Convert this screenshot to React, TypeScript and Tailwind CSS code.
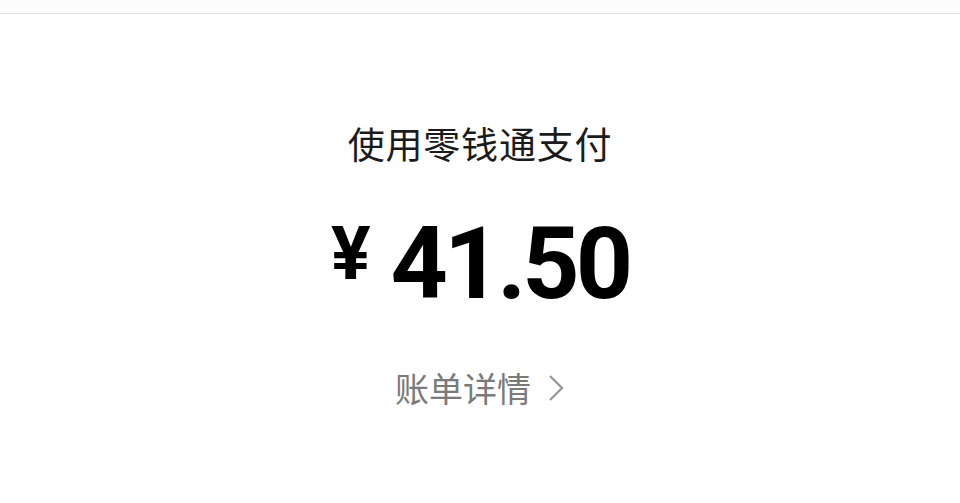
export default function App() {
  return (
    <div className="h-[503px] w-[960px] overflow-hidden bg-white font-['Noto_Sans_CJK_SC',sans-serif]">
      <div className="h-[14px] border-b border-[#e2e2e2] bg-[#fcfcfc]" />
      <div className="flex flex-col items-center">
        <h1 className="mt-[104px] text-[37px] leading-[50px] tracking-[0.8px] text-[#1b1b1b]">
          使用零钱通支付
        </h1>
        <div className="mt-[46px] flex items-center font-['Roboto',sans-serif] font-bold text-black">
          <span className="mr-[20px] mt-[-20px] text-[74px] leading-none">¥</span>
          <span className="text-[100px] leading-[100px] tracking-[-4px]">41.50</span>
        </div>
        <button className="mt-[52px] flex items-center gap-[16px] text-[34px] leading-[44px] text-[#7a7a7a]">
          账单详情
          <svg width="18" height="28" viewBox="0 0 18 28" fill="none">
            <path d="M3 2 L15 14 L3 26" stroke="#9a9a9a" strokeWidth="2.4" />
          </svg>
        </button>
      </div>
    </div>
  );
}
